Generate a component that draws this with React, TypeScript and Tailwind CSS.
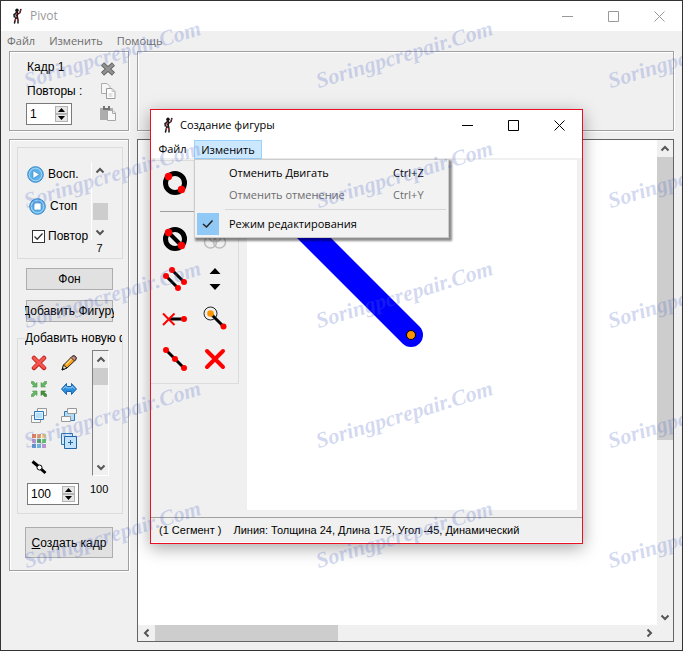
import type { ReactNode } from "react"

const WATERMARKS = Array.from({ length: 15 }, (_, i) => i)

function Figure() {
    return (
        <svg width="12" height="16" viewBox="0 0 12 16" fill="none" strokeLinecap="round">
            <circle cx="6" cy="2.300" r="1.700" fill="#111" />
            <path d="M5.800 4v5.500" stroke="#1a1a1a" strokeWidth="2.500" />
            <path d="M5 5.200L3 6.500l.3 2.500M7 6l2-1.500.8-3M5 9.500L4.200 12L3.500 15M6.500 9.500L7 12v3" stroke="#1a1a1a" strokeWidth="1.500" />
            <path d="M5.500 5.500v3.500M4.500 11.500L3.800 14M7 11.500V14M8.500 5L9.800 2" stroke="#d0303a" strokeWidth="1" strokeDasharray="1 1.800" />
        </svg>
    )
}

function Chevron({ d }: { d: "up" | "down" | "left" | "right" }) {
    const paths = {
        up: "M1.500 6.500L5 3L8.500 6.500",
        down: "M1.500 3.500L5 7L8.500 3.500",
        left: "M6.500 1.500L3 5L6.500 8.500",
        right: "M3.500 1.500L7 5L3.500 8.500",
    }
    return (
        <svg width="10" height="10" viewBox="0 0 10 10" fill="none" stroke="#555" strokeWidth="2">
            <path d={paths[d]} />
        </svg>
    )
}

function ScrollButton({ d }: { d: "up" | "down" | "left" | "right" }) {
    return (
        <button aria-label={d} className="flex h-[17px] w-[17px] shrink-0 items-center justify-center">
            <Chevron d={d} />
        </button>
    )
}

function WindowButtons({ color }: { color: string }) {
    return (
        <div className="ml-auto flex">
            {[
                ["Свернуть", "M0 5.500H11"],
                ["Развернуть", "M.5 .5H10.500V10.500H.5Z"],
                ["Закрыть", "M.5 .5L10.500 10.500M10.500 .5L.5 10.500"],
            ].map(([label, path]) => (
                <button key={label} aria-label={label} className="flex h-[30px] w-[46px] items-center justify-center">
                    <svg width="11" height="11" viewBox="0 0 11 11" fill="none" stroke={color}>
                        <path d={path} />
                    </svg>
                </button>
            ))}
        </div>
    )
}

function Spinner({ label, value }: { label: string, value: string }) {
    return (
        <div className="flex h-[22px] items-center border border-[#7a7a7a] bg-white pr-[3px]">
            <input aria-label={label} defaultValue={value} className="h-full w-0 min-w-0 flex-1 pl-[3px] text-[12px] outline-none" />
            <div className="flex flex-col">
                <button aria-label="Больше" className="flex h-2 w-[13px] items-center justify-center border border-[#b4b4b4] bg-[#e6e6e6]">
                    <svg width="7" height="4" viewBox="0 0 7 4"><path d="M3.500 0L7 4H0Z" /></svg>
                </button>
                <button aria-label="Меньше" className="flex h-2 w-[13px] items-center justify-center border border-[#b4b4b4] bg-[#e6e6e6]">
                    <svg width="7" height="4" viewBox="0 0 7 4"><path d="M0 0H7L3.500 4Z" /></svg>
                </button>
            </div>
        </div>
    )
}

function Icon({ label, children, size = 16 }: { label: string, children: ReactNode, size?: number }) {
    return (
        <button aria-label={label} className="flex items-center justify-center">
            <svg width={size} height={size} viewBox={`0 0 ${size} ${size}`} fill="none">{children}</svg>
        </button>
    )
}

function PlayButton({ label, children }: { label: string, children: ReactNode }) {
    return (
        <button className="flex items-center gap-1">
            <svg width="17" height="17" viewBox="0 0 17 17">
                <circle cx="8.500" cy="8.500" r="7.800" fill="#5db1ea" stroke="#3487c8" />
                <circle cx="8.500" cy="8.500" r="6.300" fill="none" stroke="#a5d8f8" />
                {children}
            </svg>
            {label}
        </button>
    )
}

function FrameBox() {
    return (
        <div className="flex h-20 w-[120px] shrink-0 border border-[#a0a0a0] pl-4 shadow-[1px_1px_0_#fff,inset_1px_1px_0_#fff]">
            <div className="flex w-[60px] flex-col pt-[3px]">
                <div className="pl-px leading-6">Кадр 1</div>
                <div className="pl-px leading-6 whitespace-nowrap">Повторы :</div>
                <div className="w-[46px]"><Spinner label="Повторы" value="1" /></div>
            </div>
            <div className="ml-auto mr-3 grid grid-rows-[22px_22px_22px] pt-1.5">
                <Icon label="Удалить кадр">
                    <path d="M2.500 3L13.500 13M13.500 3L2.500 13" stroke="#646464" strokeWidth="4.500" />
                    <path d="M3 3.500L13 12.500M13 3.500L3 12.500" stroke="#929292" strokeWidth="2.500" />
                </Icon>
                <Icon label="Копировать кадр">
                    <path d="M1.500 .5H7l3 3V10.500H1.500Z" fill="#f6f6f6" stroke="#adadad" />
                    <path d="M6.500 5.500H12l3 3V15.500H6.500Z" fill="#fff" stroke="#9b9b9b" />
                    <path d="M12 5.500v3h3M8.500 11h4M8.500 13h4" stroke="#c5c5c5" />
                </Icon>
                <Icon label="Вставить кадр">
                    <path d="M0 3H13V15H0Z" fill="#adadad" />
                    <path d="M3 1h7v4H3Z" fill="#737373" />
                    <path d="M5 0h3v3H5Z" fill="#ededed" />
                    <path d="M7.500 5.500H13l2.500 2.500V15.500H7.500Z" fill="#f7f7f7" stroke="#a6a6a6" />
                    <path d="M12.500 5.500v3h3" stroke="#aaa" />
                </Icon>
            </div>
        </div>
    )
}

function PlayBox() {
    return (
        <div className="ml-[7px] flex h-[112px] w-[106px] border border-[#dcdcdc] pl-2">
            <div className="flex w-[65px] flex-col pt-2.5">
                <div className="flex h-8 items-center pl-px">
                    <PlayButton label="Восп."><path d="M6 4.500L12.500 8.500L6 12.500Z" fill="#fff" stroke="#2f7fc0" strokeWidth=".6" /></PlayButton>
                </div>
                <div className="flex h-8 items-center pl-[3px]">
                    <PlayButton label="Стоп"><path d="M5 5H12V12H5Z" fill="#fff" stroke="#2f7fc0" strokeWidth=".6" /></PlayButton>
                </div>
                <label className="flex h-7 items-center gap-[3px] pl-[6px]">
                    <span className="grid">
                        <input type="checkbox" defaultChecked className="col-start-1 row-start-1 h-[13px] w-[13px] appearance-none border border-[#333] bg-white" />
                        <svg className="pointer-events-none col-start-1 row-start-1" width="13" height="13" viewBox="0 0 13 13" fill="none" stroke="#333" strokeWidth="1.300">
                            <path d="M2.500 6.500L5.200 9.200L10.500 3.500" />
                        </svg>
                    </span>
                    Повтор
                </label>
            </div>
            <div className="flex flex-col items-center pt-3.5">
                <div className="flex h-[78px] w-[17px] flex-col items-center border-l border-white">
                    <ScrollButton d="up" />
                    <div className="mt-6 h-[17px] w-[15px] bg-[#cdcdcd]" />
                    <div className="mt-auto"><ScrollButton d="down" /></div>
                </div>
                <div className="text-[11px] leading-4">7</div>
            </div>
        </div>
    )
}

function FigureBox() {
    return (
        <fieldset className="ml-[7px] mt-2 h-[184px] w-[106px] min-w-0 border border-[#dcdcdc]">
            <legend className="ml-[7px] w-[97px] overflow-hidden whitespace-nowrap leading-4">Добавить новую фигуру</legend>
            <div className="flex pl-1.5 pt-1">
                <div className="grid grid-cols-[30px_30px] auto-rows-[26px]">
                    <Icon label="Удалить">
                        <path d="M3 3L13 13M13 3L3 13" stroke="#c4231c" strokeWidth="4.500" strokeLinecap="round" />
                        <path d="M3 3L13 12.500M13 3L3 12.500" stroke="#f2564e" strokeWidth="2.800" strokeLinecap="round" />
                    </Icon>
                    <Icon label="Правка">
                        <path d="M1 15L2.500 10L11 1.500Q13 0 14.500 1.500Q16 3 14.500 5L6 13Z" fill="#f5a01c" stroke="#222" />
                        <path d="M1 15L2.500 10L6 13Z" fill="#f3d8a8" stroke="#222" />
                        <path d="M1 15l.7-2.200 1.500 1.500Z" fill="#000" />
                        <path d="M11 1.500Q13 0 14.500 1.500Q16 3 14.500 5L13.500 6L10 2.500Z" fill="#cf8480" stroke="#333" />
                        <path d="M5 9.500L10.500 4" stroke="#ffd27c" strokeWidth="1.500" />
                    </Icon>
                    <Icon label="Центр">
                        <path d="M6 1.500V6H1.500L2.700 4.500L.3 2.500V.5H2.500L4.500 2.800Z M10 1.500V6H14.500L13.300 4.500L15.700 2.500V.5H13.500L11.500 2.800Z M6 14.500V10H1.500L2.700 11.500L.3 13.500V15.500H2.500L4.500 13.200Z" fill="#67b567" stroke="#4b9c4b" strokeWidth=".6" />
                        <path d="M10 14.500V10H14.500L13.300 11.500L15.700 13.500V15.500H13.500L11.500 13.200Z" fill="#4a8f3e" stroke="#357a2c" strokeWidth=".6" />
                    </Icon>
                    <Icon label="Отразить">
                        <path d="M.5 8L5.500 2.500V5.500H10.500V2.500L15.500 8L10.500 13.500V10.500H5.500V13.500Z" fill="#2d8ddd" stroke="#1b67ae" />
                        <path d="M2 8L5 5V6.800H11V5L13.500 8" stroke="#8dcbf7" />
                    </Icon>
                    <Icon label="На передний план">
                        <path d="M6.500 1.500H15.500V8.500H6.500Z" fill="#f8f8f8" stroke="#999" />
                        <path d="M.5 8.500H9.500V15.500H.5Z" fill="#f8f8f8" stroke="#999" />
                        <path d="M3.500 4.500H12.500V12.500H3.500Z" fill="#b5ddf8" stroke="#2d77b8" />
                        <path d="M4.500 5.500H11.500V11.500H4.500Z" stroke="#e4f4ff" />
                    </Icon>
                    <Icon label="На задний план">
                        <path d="M3.500 4.500H13.500V13.500H3.500Z" fill="#b5ddf8" stroke="#2d77b8" />
                        <path d="M6.500 1.500H15.500V6.500H6.500Z" fill="#f8f8f8" stroke="#999" />
                        <path d="M.5 9.500H9.500V14.500H.5Z" fill="#f8f8f8" stroke="#999" />
                    </Icon>
                    <Icon label="Цвет">
                        <path d="M1 1h4v4H1Z" fill="#d98165" /><path d="M6 1h4v4H6Z" fill="#eea45d" /><path d="M11 1h4v4h-4Z" fill="#f1ce83" />
                        <path d="M1 6h4v4H1Z" fill="#c9a0cf" /><path d="M6 6h4v4H6Z" fill="#58ad56" /><path d="M11 6h4v4h-4Z" fill="#68c968" />
                        <path d="M1 11h4v4H1Z" fill="#6395cf" /><path d="M6 11h4v4H6Z" fill="#70b0df" /><path d="M11 11h4v4h-4Z" fill="#b794c9" />
                    </Icon>
                    <Icon label="Дублировать">
                        <path d="M.5 .5H11.500V11.500H.5Z" fill="#d2eafa" stroke="#2d77b8" />
                        <path d="M3.500 3.500H15.500V15.500H3.500Z" fill="#c2e3f9" stroke="#2464a5" />
                        <path d="M9.500 7V12M7 9.500H12" stroke="#2464a5" />
                    </Icon>
                    <Icon label="Соединить">
                        <path d="M1.500 2.500L7 7M10 10L14.500 14" stroke="#000" strokeWidth="3" />
                        <circle cx="8.500" cy="8.500" r="2.500" fill="#fff" stroke="#000" />
                    </Icon>
                </div>
                <div className="ml-2 flex h-[126px] w-[17px] flex-col items-center border border-b-white border-l-[#808080] border-r-white border-t-[#808080] bg-[#f0f0f0]">
                    <ScrollButton d="up" />
                    <div className="h-[17px] w-[15px] shrink-0 bg-[#cdcdcd]" />
                    <div className="mt-auto"><ScrollButton d="down" /></div>
                </div>
            </div>
            <div className="flex pl-[9px] pt-[3px]">
                <div className="w-[52px]"><Spinner label="Масштаб" value="100" /></div>
                <div className="ml-[11px] text-[11px] leading-3">100</div>
            </div>
        </fieldset>
    )
}

function Ring({ slash = false }: { slash?: boolean }) {
    return (
        <>
            <circle cx="14" cy="14" r="9.500" stroke="#000" strokeWidth="5" />
            {slash && <path d="M8 8L20 20" stroke="#000" strokeWidth="4" />}
            <circle cx="7.500" cy="7.500" r="3.700" fill="red" />
            <circle cx="20.500" cy="20.500" r="3.700" fill="red" />
        </>
    )
}

function Tools() {
    return (
        <div className="h-[224px] w-[88px] shrink-0 border border-l-0 border-[#dcdcdc] pl-1">
            <div className="grid h-[44px] grid-cols-[40px_40px] items-center">
                <Icon label="Круг" size={28}><Ring /></Icon>
            </div>
            <div className="ml-[5px] mr-2 mt-[6px] border-t border-[#a0a0a0]" />
            <div className="mt-[7px] grid grid-cols-[40px_40px] auto-rows-[40px]">
                <Icon label="Линия в круг" size={28}><Ring slash /></Icon>
                <Icon label="Объединить" size={28}>
                    <g stroke="#bdbdbd" strokeWidth="1.500">
                        <circle cx="9.500" cy="17" r="6" />
                        <circle cx="18.500" cy="17" r="6" />
                        <circle cx="14" cy="11" r="6" />
                    </g>
                </Icon>
                <Icon label="Копировать сегмент" size={28}>
                    <path d="M5 11L17 23M11 5L23 17" stroke="#000" strokeWidth="3" />
                    <g fill="red"><circle cx="5" cy="11" r="3" /><circle cx="17" cy="23" r="3" /><circle cx="11" cy="5" r="3" /><circle cx="23" cy="17" r="3" /></g>
                </Icon>
                <Icon label="Толщина" size={28}>
                    <path d="M14 3L19.500 9H8.500Z M8.500 19H19.500L14 25Z" fill="#000" />
                </Icon>
                <Icon label="Отрезать" size={28}>
                    <path d="M9 14H23" stroke="#000" strokeWidth="3" />
                    <path d="M2 8.500L13.500 20M13.500 8.500L2 20" stroke="red" strokeWidth="2" />
                    <circle cx="23" cy="14" r="3" fill="red" />
                </Icon>
                <Icon label="Начало" size={28}>
                    <circle cx="9.500" cy="8.500" r="6.500" stroke="#222" />
                    <path d="M9.500 8.500L22 21" stroke="#000" strokeWidth="3" />
                    <circle cx="9.500" cy="8.500" r="3.300" fill="#ff9400" />
                    <circle cx="22.500" cy="21.500" r="3" fill="red" />
                </Icon>
                <Icon label="Разделить" size={28}>
                    <path d="M5 5L23 23" stroke="#000" strokeWidth="3" />
                    <g fill="red"><circle cx="5" cy="5" r="3" /><circle cx="14" cy="14" r="3" /><circle cx="23" cy="23" r="3" /></g>
                </Icon>
                <Icon label="Удалить сегмент" size={28}>
                    <path d="M6 6L22 22M22 6L6 22" stroke="red" strokeWidth="4" strokeLinecap="round" />
                </Icon>
            </div>
        </div>
    )
}

function EditMenu() {
    return (
        <div className="absolute left-0 top-[19px] z-10 w-[255px] border border-[#ccc] bg-[#f2f2f2] px-0.5 py-0.5 text-black shadow-[2px_2px_2px_1px_rgba(0,0,0,0.45)]">
            <button className="flex h-[22px] w-full items-center pl-8">
                <span>Отменить Двигать</span>
                <span className="ml-auto w-[53px] text-left">Ctrl+Z</span>
            </button>
            <button disabled className="flex h-[22px] w-full items-center pl-8 text-[#6d6d6d]">
                <span>Отменить отменение</span>
                <span className="ml-auto w-[53px] text-left">Ctrl+Y</span>
            </button>
            <div className="my-[3px] ml-7 border-t border-[#d7d7d7]" />
            <button className="flex h-[22px] w-full items-center">
                <span className="flex h-[22px] w-[22px] items-center justify-center bg-[#90c8f6]">
                    <svg width="12" height="10" viewBox="0 0 12 10" fill="none" stroke="#222" strokeWidth="1.500"><path d="M1 5L4.500 8L10.500 1.500" /></svg>
                </span>
                <span className="pl-2.5">Режим редактирования</span>
            </button>
        </div>
    )
}

function FigureDialog() {
    return (
        <div role="dialog" aria-label="Создание фигуры" className="absolute left-[149px] top-[108px] flex w-[433px] flex-col border border-[#e81123] bg-[#f0f0f0] shadow-[0_4px_16px_rgba(0,0,0,0.35)]">
            <div className="flex h-[30px] items-center bg-white pl-[11px] font-['Open_Sans',sans-serif] text-[11px]">
                <Figure />
                <span className="pl-1.5">Создание фигуры</span>
                <WindowButtons color="#000" />
            </div>
            <div className="flex h-[18px] bg-white font-['Open_Sans',sans-serif] text-[11px]">
                <button className="w-[43px] leading-[18px]">Файл</button>
                <div className="relative">
                    <button className="h-[19px] w-[68px] border border-[#99d1ff] bg-[#cce8ff] leading-[17px]">Изменить</button>
                    <EditMenu />
                </div>
            </div>
            <div className="flex pt-0.5">
                <Tools />
                <svg className="ml-2 mr-[5px] h-[350px] min-w-0 flex-1 bg-white">
                    <path d="M40 51L164 175" stroke="#00f" strokeWidth="24" strokeLinecap="round" />
                    <circle cx="164" cy="175" r="4.500" fill="#ff9400" stroke="#000" />
                </svg>
            </div>
            <div className="mt-[7px] flex h-[26px] items-center gap-3 border-b border-t border-b-white border-t-[#a0a0a0] pl-2 text-[11px]">
                <span>(1 Сегмент )</span>
                <span>Линия: Толщина 24, Длина 175, Угол -45, Динамический</span>
            </div>
        </div>
    )
}

export default function App() {
    return (
        <div className="relative flex min-h-screen flex-col overflow-hidden border border-[#333] bg-[#f0f0f0] font-['Liberation_Sans',Arial,sans-serif] text-[12px] text-black">
            <header className="flex h-[30px] items-center bg-white pl-2.5 font-['Open_Sans',sans-serif] text-[#999]">
                <Figure />
                <span className="pl-[7px]">Pivot</span>
                <WindowButtons color="#999" />
            </header>
            <nav className="flex h-5 items-center gap-3.5 pl-1.5 font-['Open_Sans',sans-serif] text-[11px] text-[#6d6d6d]">
                <button>Файл</button>
                <button>Изменить</button>
                <button>Помощь</button>
            </nav>

            <main className="flex flex-1 flex-col gap-2 px-2 pb-2">
                <div className="flex gap-2">
                    <FrameBox />
                    <div className="h-20 flex-1 border border-[#a0a0a0] shadow-[1px_1px_0_#fff,inset_1px_1px_0_#fff]" />
                </div>
                <div className="flex flex-1 gap-2">
                    <aside className="h-[432px] w-[120px] shrink-0 border border-[#a0a0a0] pt-[7px] shadow-[1px_1px_0_#fff,inset_1px_1px_0_#fff]">
                        <PlayBox />
                        <button className="ml-4 mt-[9px] block h-[22px] w-[87px] border border-[#adadad] bg-[#e1e1e1]">Фон</button>
                        <button className="ml-4 mt-[10px] flex h-[22px] w-[87px] items-center justify-center border border-[#adadad] bg-[#e1e1e1]">
                            <span className="flex w-[89px] shrink-0 justify-center overflow-hidden whitespace-nowrap">Добавить Фигуру</span>
                        </button>
                        <FigureBox />
                        <button className="ml-[15px] mt-[13px] block h-[31px] w-[88px] border border-[#adadad] bg-[#e1e1e1]"><u>С</u>оздать кадр</button>
                    </aside>
                    <div className="flex min-w-0 flex-1 flex-col border border-[#646464] bg-[#f0f0f0]">
                        <div className="flex flex-1">
                            <div className="flex-1 bg-white" />
                            <div className="flex w-4 flex-col items-center">
                                <ScrollButton d="up" />
                                <div className="h-[283px] w-full bg-[#cdcdcd]" />
                                <div className="mt-auto"><ScrollButton d="down" /></div>
                            </div>
                        </div>
                        <div className="flex h-4 items-center pr-4">
                            <ScrollButton d="left" />
                            <div className="h-full w-[183px] bg-[#cdcdcd]" />
                            <div className="ml-auto"><ScrollButton d="right" /></div>
                        </div>
                    </div>
                </div>
            </main>

            <FigureDialog />

            <div aria-hidden className="pointer-events-none absolute left-[27px] top-[-28px] z-20 grid auto-rows-[120px] grid-cols-[292px_292px_292px] select-none">
                {WATERMARKS.map(i => (
                    <div key={i} className="flex items-end">
                        <span className="origin-bottom-left -rotate-[17deg] font-['Liberation_Serif',serif] text-[22px] font-bold italic leading-6 text-[#5068c8]/25">Soringpcrepair.Com</span>
                    </div>
                ))}
            </div>
        </div>
    )
}
